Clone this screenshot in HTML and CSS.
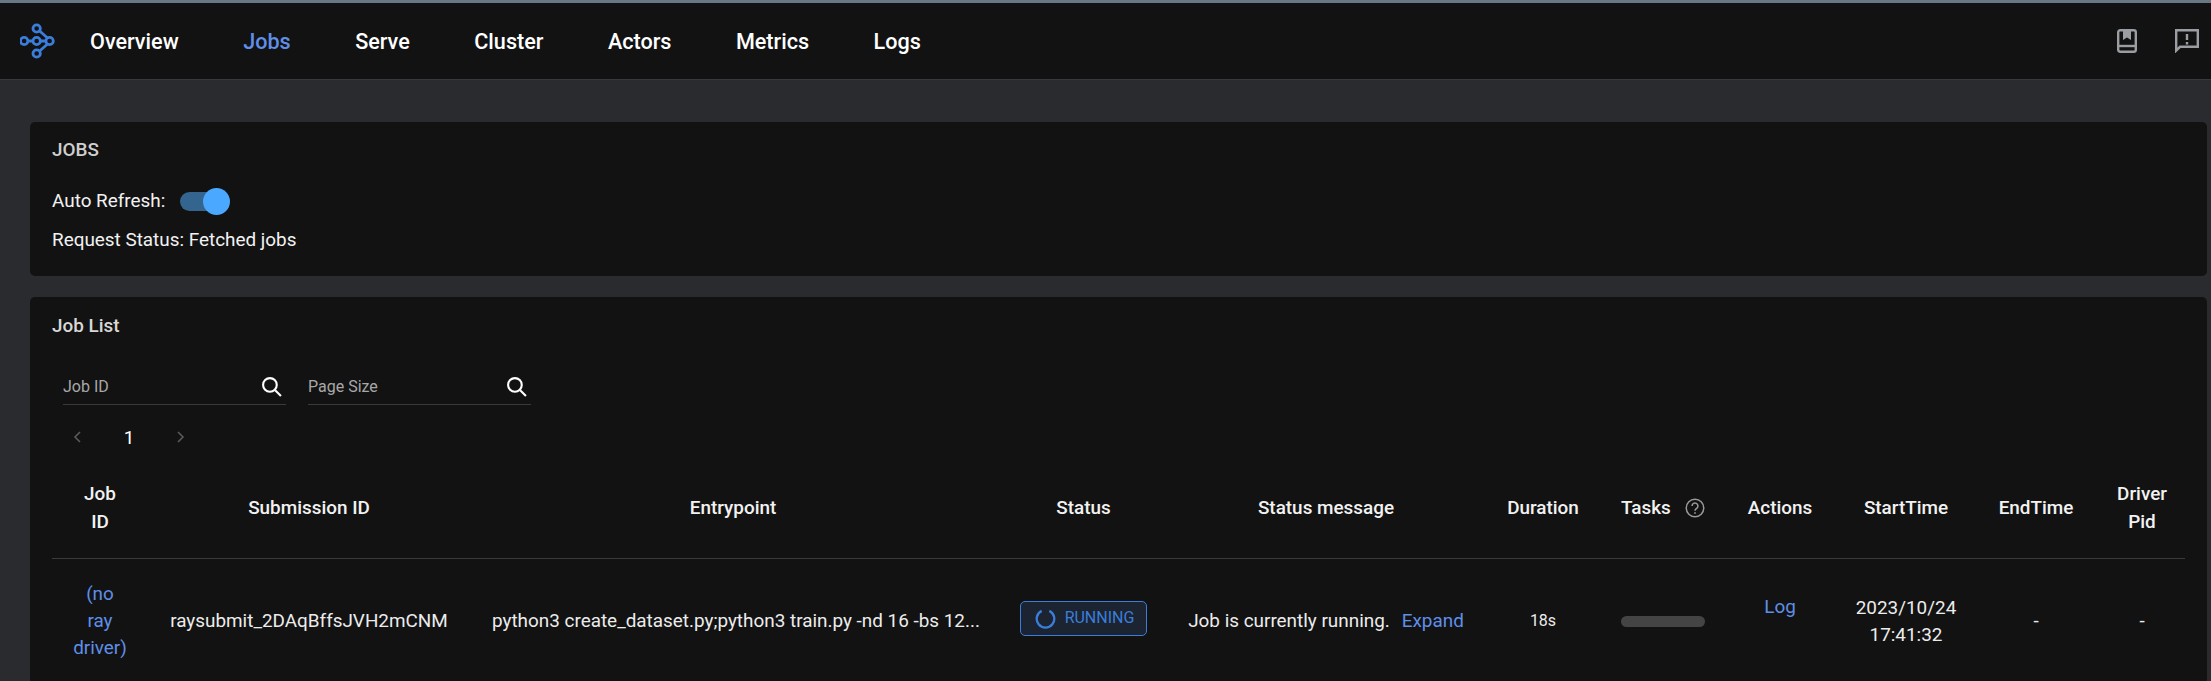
FILE: index.html
```html
<!DOCTYPE html>
<html lang="en">
<head>
    <meta charset="UTF-8">
    <meta name="viewport" content="width=device-width, initial-scale=1.0">
    <title>Jobs</title>
    <link rel="stylesheet" href="styles.css">
</head>
<body>
    <header class="topbar">
        <svg class="logo" viewBox="0 0 40 36" aria-hidden="true">
            <g fill="none" stroke="#3b7ddb" stroke-width="3">
                <path d="M9 18h5M22 18h6M21 7l9 8M21 29l9-8"/>
                <circle cx="18" cy="4.5" r="4"/>
                <circle cx="4.5" cy="18" r="4"/>
                <circle cx="18" cy="18" r="4"/>
                <circle cx="32" cy="18" r="4"/>
                <circle cx="18" cy="31.5" r="4"/>
            </g>
        </svg>
        <nav class="nav">
            <a href="#overview">Overview</a>
            <a href="#jobs" class="active">Jobs</a>
            <a href="#serve">Serve</a>
            <a href="#cluster">Cluster</a>
            <a href="#actors">Actors</a>
            <a href="#metrics">Metrics</a>
            <a href="#logs">Logs</a>
        </nav>
        <div class="topbar-icons">
            <svg class="icon-book" viewBox="0 0 20 24" aria-hidden="true">
                <rect x="1.200" y="1.200" width="17.600" height="21.600" rx="2" fill="none" stroke="#9a9da1" stroke-width="2.400"/>
                <path d="M6 1h8v10l-4-2.500-4 2.500z" fill="#9a9da1"/>
                <path d="M1 17h18" stroke="#9a9da1" stroke-width="2.400"/>
            </svg>
            <svg class="icon-feedback" viewBox="0 0 24 24" aria-hidden="true">
                <path d="M1.200 1.200h21.600v16.600H5l-3.800 3.800z" fill="none" stroke="#9a9da1" stroke-width="2.400"/>
                <path d="M10.800 5h2.400v6h-2.400zM10.800 13h2.400v2.400h-2.400z" fill="#9a9da1"/>
            </svg>
        </div>
    </header>

    <main class="content">
        <section class="card card-jobs">
            <h2 class="card-title jobs-title">JOBS</h2>
            <div class="refresh-row">
                <span>Auto Refresh:</span>
                <span class="switch"><span class="switch-thumb"></span></span>
            </div>
            <p class="request-status">Request Status: Fetched jobs</p>
        </section>

        <section class="card card-list">
            <h2 class="card-title list-title">Job List</h2>
            <div class="filters">
                <div class="filter">
                    <span>Job ID</span>
                    <svg class="search" viewBox="0 0 20 20" aria-hidden="true"><circle cx="8.500" cy="8.500" r="6.500" fill="none" stroke="#fff" stroke-width="2"/><path d="M13.500 13.500l5.500 5.500" stroke="#fff" stroke-width="2"/></svg>
                </div>
                <div class="filter">
                    <span>Page Size</span>
                    <svg class="search" viewBox="0 0 20 20" aria-hidden="true"><circle cx="8.500" cy="8.500" r="6.500" fill="none" stroke="#fff" stroke-width="2"/><path d="M13.500 13.500l5.500 5.500" stroke="#fff" stroke-width="2"/></svg>
                </div>
            </div>
            <div class="pager">
                <svg class="chevron" viewBox="0 0 8 12" aria-hidden="true"><path d="M7 1L2 6l5 5" fill="none" stroke="#5a5a5a" stroke-width="1.600"/></svg>
                <span class="page-num">1</span>
                <svg class="chevron" viewBox="0 0 8 12" aria-hidden="true"><path d="M1 1l5 5-5 5" fill="none" stroke="#5a5a5a" stroke-width="1.600"/></svg>
            </div>
            <table class="job-table">
                <colgroup>
                    <col class="col-job">
                    <col class="col-submission">
                    <col class="col-entry">
                    <col class="col-status">
                    <col class="col-message">
                    <col class="col-duration">
                    <col class="col-tasks">
                    <col class="col-actions">
                    <col class="col-start">
                    <col class="col-end">
                    <col class="col-pid">
                </colgroup>
                <thead>
                    <tr>
                        <th>Job<br>ID</th>
                        <th>Submission ID</th>
                        <th>Entrypoint</th>
                        <th>Status</th>
                        <th>Status message</th>
                        <th>Duration</th>
                        <th class="tasks-head">
                            <span class="tasks-label">Tasks
                                <svg class="help" viewBox="0 0 24 24" aria-hidden="true"><circle cx="12" cy="12" r="10.500" fill="none" stroke="#9a9a9a" stroke-width="1.800"/><path d="M8.500 9.500a3.500 3.500 0 1 1 5.500 2.900c-1.300.9-2 1.500-2 3" fill="none" stroke="#9a9a9a" stroke-width="1.800"/><path d="M11 17h2v2h-2z" fill="#9a9a9a"/></svg>
                            </span>
                        </th>
                        <th>Actions</th>
                        <th>StartTime</th>
                        <th>EndTime</th>
                        <th>Driver<br>Pid</th>
                    </tr>
                </thead>
                <tbody>
                    <tr>
                        <td><a href="#job">(no<br>ray<br>driver)</a></td>
                        <td>raysubmit_2DAqBffsJVH2mCNM</td>
                        <td class="entrypoint">python3 create_dataset.py;python3 train.py -nd 16 -bs 12...</td>
                        <td>
                            <span class="badge">
                                <svg class="spinner" viewBox="0 0 22 22" aria-hidden="true"><path d="M7 3a9.200 9.200 0 1 0 8 0" fill="none" stroke="#3b7ddb" stroke-width="2.400"/></svg>
                                RUNNING
                            </span>
                        </td>
                        <td>Job is currently running.<a class="expand" href="#expand">Expand</a></td>
                        <td class="duration">18s</td>
                        <td><div class="progress"></div></td>
                        <td><a class="log-link" href="#log">Log</a></td>
                        <td>2023/10/24<br>17:41:32</td>
                        <td>-</td>
                        <td>-</td>
                    </tr>
                </tbody>
            </table>
        </section>
    </main>
</body>
</html>
```

FILE: styles.css
```css
html, body {
    height: 100%;
}

body {
    font-family: Roboto, "Liberation Sans", sans-serif;
    margin: 0;
    overflow: hidden;
    background-color: #292b2e;
    color: #f2f2f2;
    font-size: 18.9px;
}

a {
    color: #5f8fe8;
    text-decoration: none;
}

.topbar {
    display: flex;
    align-items: center;
    box-sizing: border-box;
    height: 80px;
    padding-left: 20px;
    background-color: #121212;
    border-top: 3px solid #6a7785;
    border-bottom: 1px solid #363a3f;
}

.logo {
    width: 37px;
    height: 38px;
    margin-right: 33px;
}

.nav {
    display: flex;
    gap: 64.5px;
}

.nav a {
    color: #fff;
    font-size: 21.6px;
    font-weight: 500;
}

.nav a.active {
    color: #5f8fe8;
}

.topbar-icons {
    display: flex;
    align-items: center;
    gap: 38px;
    margin-left: auto;
    margin-right: 12px;
}

.icon-book {
    width: 20px;
    height: 24px;
}

.icon-feedback {
    width: 24px;
    height: 24px;
}

.content {
    display: flex;
    flex-direction: column;
    gap: 21px;
    padding: 42px 4px 0 30px;
}

.card {
    background-color: #121212;
    border-radius: 5px;
    padding: 0 22px;
}

.card-jobs {
    height: 154px;
}

.card-title {
    margin: 0;
    font-size: 18.9px;
    line-height: 26px;
}

.jobs-title {
    padding-top: 15px;
    font-weight: 500;
    color: #cfcfcf;
}

.list-title {
    padding-top: 16px;
    font-weight: 500;
    color: #d8d8d8;
}

.refresh-row {
    display: flex;
    align-items: center;
    gap: 15px;
    margin-top: 25px;
    line-height: 26px;
}

.switch {
    position: relative;
    display: block;
    width: 44px;
    height: 19px;
    border-radius: 10px;
    background-color: #33658f;
}

.switch-thumb {
    position: absolute;
    top: -4px;
    right: -6px;
    width: 27px;
    height: 27px;
    border-radius: 50%;
    background-color: #4aa8ff;
}

.request-status {
    margin: 13px 0 0;
    line-height: 26px;
}

.filters {
    display: flex;
    gap: 22px;
    margin-top: 30px;
    padding-left: 11px;
}

.filter {
    display: flex;
    align-items: center;
    justify-content: space-between;
    box-sizing: border-box;
    width: 223px;
    height: 36px;
    padding: 0 4px 0 0;
    border-bottom: 1px solid #3a3a3a;
    color: #a8a8a8;
    font-size: 16px;
}

.search {
    width: 21px;
    height: 21px;
}

.pager {
    display: flex;
    align-items: center;
    height: 40px;
    margin-top: 12px;
    padding-left: 21px;
}

.chevron {
    width: 8px;
    height: 12px;
}

.page-num {
    width: 96px;
    text-align: center;
    color: #fff;
    font-size: 18.9px;
}

.job-table {
    width: 2133px;
    table-layout: fixed;
    border-collapse: collapse;
}

.col-job { width: 96px; }
.col-submission { width: 322px; }
.col-entry { width: 526px; }
.col-status { width: 175px; }
.col-message { width: 310px; }
.col-duration { width: 124px; }
.col-tasks { width: 116px; }
.col-actions { width: 118px; }
.col-start { width: 134px; }
.col-end { width: 126px; }
.col-pid { width: 86px; }

.job-table th,
.job-table td {
    padding: 0 16px;
    text-align: center;
    line-height: 26.7px;
}

.job-table th {
    height: 100px;
    padding-top: 1px;
    font-weight: 500;
    line-height: 28px;
    border-bottom: 1px solid #3a3a3a;
    color: #f2f2f2;
}

.job-table td {
    height: 125px;
    color: #ececec;
}

.tasks-head {
    white-space: nowrap;
}

.tasks-label {
    display: flex;
    align-items: center;
    gap: 14px;
}

.help {
    width: 20px;
    height: 20px;
}

.job-table td.entrypoint {
    padding-left: 22px;
    padding-right: 0;
    text-align: left;
    white-space: nowrap;
}

.badge {
    display: inline-flex;
    align-items: center;
    gap: 9px;
    box-sizing: border-box;
    height: 35px;
    padding: 0 12px 0 14px;
    border: 1px solid #3b7ddb;
    border-radius: 5px;
    background-color: #1b2430;
    color: #3b7ddb;
    font-size: 16px;
    white-space: nowrap;
    margin-bottom: 6px;
}

.spinner {
    width: 21px;
    height: 21px;
}

.expand {
    margin-left: 12px;
}

.job-table td.duration {
    font-size: 16px;
}

.progress {
    height: 11px;
    border-radius: 6px;
    background-color: #444;
}

.log-link {
    display: block;
    margin-bottom: 28px;
}
```
